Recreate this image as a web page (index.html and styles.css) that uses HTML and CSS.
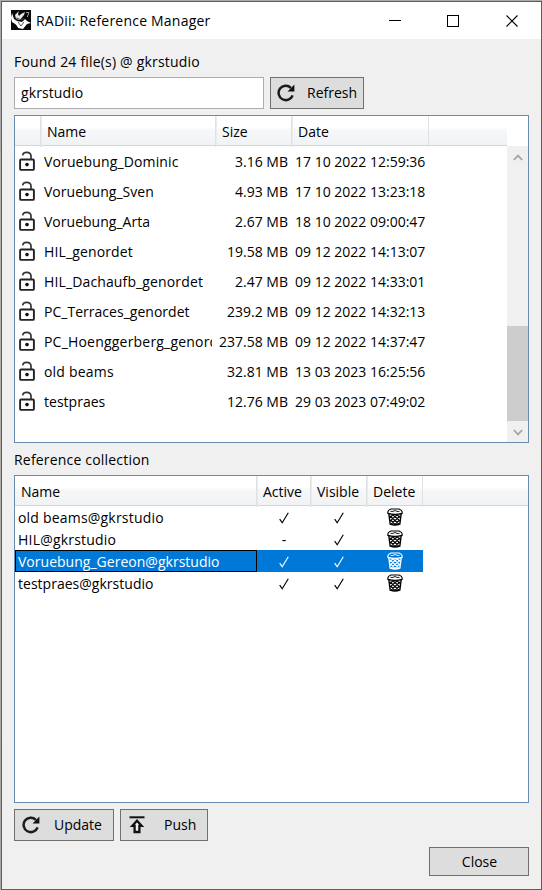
FILE: index.html
```
<!DOCTYPE html>
<html lang="en">
<head>
<meta charset="utf-8">
<title>RADii: Reference Manager</title>
<link rel="stylesheet" href="styles.css">
</head>
<body>
<svg width="0" height="0" class="defs" aria-hidden="true">
  <symbol id="lock" viewBox="0 0 16 21">
    <rect x="1.1" y="8.5" width="13.8" height="10.4" rx="1" fill="none" stroke="#222" stroke-width="1.9"/>
    <path d="M3.7 4.4C4 .4 11.7 .1 12 5V8.5" fill="none" stroke="#333" stroke-width="1.7"/>
    <circle cx="8" cy="13.6" r="1.8" fill="#111"/>
  </symbol>
  <symbol id="reload" viewBox="0 0 18 18">
    <path d="M15.6 11.3A7.2 7.2 0 1 1 13.9 3.8" fill="none" stroke="#1c1c1c" stroke-width="2.5"/>
    <path d="M17.4 .6V7.6H10.6Z" fill="#111"/>
  </symbol>
  <symbol id="push" viewBox="0 0 16 18">
    <path d="M.5 1.3H15.5" stroke="#111" stroke-width="2"/>
    <path d="M8 4.8L12.6 9.8H10.4V16H5.6V9.8H3.4Z" fill="#eee" stroke="#111" stroke-width="2.3"/>
  </symbol>
  <symbol id="check" viewBox="0 0 10 12">
    <path d="M.7 7.2L3.2 10.8L9.3 .8" fill="none" stroke="currentColor" stroke-width="1.15"/>
  </symbol>
  <symbol id="bin" viewBox="0 0 16 18">
    <path d="M1.8 5.5L3.2 16.2Q8 17.8 12.8 16.2L14.2 5.5Z" fill="none" stroke="currentColor" stroke-width="1.4"/>
    <path d="M3 8L11.8 16M5.5 6.5L13 13M9 6L13.3 9.5M3.6 12L8 16.5M13 8L4.2 16M10.5 6.5L3 13M7 6L2.8 9.5M12.5 12L8 16.5" stroke="currentColor" stroke-width="1.1"/>
    <path d="M.9 3.8Q1 2.2 4 1H12Q15 2.2 15.1 3.8V5.3Q8 7.3 .9 5.3Z" class="lid" stroke="currentColor" stroke-width="1.2"/>
    <path d="M3.5 3.4H6L8 2.5L10 3.4H12.5" fill="none" stroke="currentColor" stroke-width=".9"/>
  </symbol>
</svg>
<main class="window">
  <header class="titlebar">
    <svg class="logo" viewBox="0 0 20 20">
      <rect width="20" height="20" fill="#080808"/>
      <path d="M1 3L3 9L6 11L11 12L14 9L16 11L20 13L16 14L12 19L7 18L4 14L1 12L0 8Z" fill="#fff"/>
      <path d="M8 1L4 5L5 9L9 10L13 5L14 2L10 4L8 6L7 4Z" fill="#e6e6e6"/>
      <path d="M5 8L11 10L13 8M7 12L10 16L13 12" fill="none" stroke="#444" stroke-width=".9"/>
      <path d="M0 13Q5 13 7 18L8 20H0Z" fill="#080808"/>
      <path d="M15 2.5H18L16.3 7" fill="none" stroke="#aaa" stroke-width=".9"/>
    </svg>
    <h1 class="title">RADii: Reference Manager</h1>
    <svg class="controls" viewBox="0 0 130 12" shape-rendering="crispEdges">
      <path d="M0 5.5H12" stroke="#000"/>
      <rect x="58.5" y=".5" width="11" height="11" fill="none" stroke="#000"/>
      <path d="M117.5 .5L128.5 11.5M128.5 .5L117.5 11.5" stroke="#000" shape-rendering="auto" stroke-width="1.1"/>
    </svg>
  </header>
  <div class="content">
    <div class="label found">Found 24 file(s) @ gkrstudio</div>
    <div class="search">
      <div class="input">gkrstudio</div>
      <div class="button refresh"><svg class="reload"><use href="#reload"/></svg><span>Refresh</span></div>
    </div>
    <section class="list files">
      <div class="main">
        <div class="head files-grid"><span></span><span>Name</span><span>Size</span><span>Date</span></div>
        <div class="row files-grid"><svg class="lock"><use href="#lock"/></svg><span class="name">Voruebung_Dominic</span><span class="size">3.16 MB</span><span class="date">17 10 2022 12:59:36</span></div>
        <div class="row files-grid"><svg class="lock"><use href="#lock"/></svg><span class="name snug">Voruebung_Sven</span><span class="size">4.93 MB</span><span class="date">17 10 2022 13:23:18</span></div>
        <div class="row files-grid"><svg class="lock"><use href="#lock"/></svg><span class="name snug">Voruebung_Arta</span><span class="size">2.67 MB</span><span class="date">18 10 2022 09:00:47</span></div>
        <div class="row files-grid"><svg class="lock"><use href="#lock"/></svg><span class="name">HIL_genordet</span><span class="size">19.58 MB</span><span class="date">09 12 2022 14:13:07</span></div>
        <div class="row files-grid"><svg class="lock"><use href="#lock"/></svg><span class="name">HIL_Dachaufb_genordet</span><span class="size">2.47 MB</span><span class="date">09 12 2022 14:33:01</span></div>
        <div class="row files-grid"><svg class="lock"><use href="#lock"/></svg><span class="name snug">PC_Terraces_genordet</span><span class="size">239.2 MB</span><span class="date">09 12 2022 14:32:13</span></div>
        <div class="row files-grid"><svg class="lock"><use href="#lock"/></svg><span class="name wide">PC_Hoenggerberg_genordet</span><span class="size">237.58 MB</span><span class="date">09 12 2022 14:37:47</span></div>
        <div class="row files-grid"><svg class="lock"><use href="#lock"/></svg><span class="name wide">old beams</span><span class="size">32.81 MB</span><span class="date">13 03 2023 16:25:56</span></div>
        <div class="row files-grid"><svg class="lock"><use href="#lock"/></svg><span class="name snug">testpraes</span><span class="size">12.76 MB</span><span class="date">29 03 2023 07:49:02</span></div>
      </div>
      <div class="scrollbar">
        <svg class="arrow" viewBox="0 0 10 7"><path d="M.8 6L5 1.6L9.2 6" fill="none" stroke="#a3a3a3" stroke-width="1.8"/></svg>
        <div class="thumb"></div>
        <svg class="arrow" viewBox="0 0 10 7"><path d="M.8 1L5 5.4L9.2 1" fill="none" stroke="#a3a3a3" stroke-width="1.8"/></svg>
      </div>
    </section>
    <div class="label collection">Reference collection</div>
    <section class="list refs">
      <div class="main">
        <div class="head refs-grid"><span>Name</span><span>Active</span><span>Visible</span><span>Delete</span></div>
        <div class="ref refs-grid"><span class="name wide">old beams@gkrstudio</span><svg class="check"><use href="#check"/></svg><svg class="check"><use href="#check"/></svg><svg class="bin"><use href="#bin"/></svg></div>
        <div class="ref refs-grid"><span class="name wide">HIL@gkrstudio</span><span class="dash">-</span><svg class="check"><use href="#check"/></svg><svg class="bin"><use href="#bin"/></svg></div>
        <div class="ref refs-grid selected"><span class="name snug">Voruebung_Gereon@gkrstudio</span><svg class="check"><use href="#check"/></svg><svg class="check"><use href="#check"/></svg><svg class="bin"><use href="#bin"/></svg></div>
        <div class="ref refs-grid"><span class="name snug">testpraes@gkrstudio</span><svg class="check"><use href="#check"/></svg><svg class="check"><use href="#check"/></svg><svg class="bin"><use href="#bin"/></svg></div>
      </div>
    </section>
    <div class="actions">
      <div class="button update"><svg class="reload"><use href="#reload"/></svg><span>Update</span></div>
      <div class="button push"><svg class="up"><use href="#push"/></svg><span>Push</span></div>
    </div>
    <div class="footer"><div class="button close">Close</div></div>
  </div>
</main>
</body>
</html>
```
FILE: styles.css
```
* { box-sizing: border-box; }
body {
  margin: 0;
  height: 890px;
  padding: 1px 0 0 1px;
  background: linear-gradient(#aaa, #aaa 150px, #b5b0ab 151px, #aba7a2);
  font: 14px/20px "Open Sans", "Noto Sans", sans-serif;
  color: #000;
  overflow: hidden;
}
.defs { position: absolute; }
svg { display: block; }
.window {
  width: 541px;
  height: 889px;
  border: 1px solid #5c5e61;
  background: #f0f0f0;
}
.titlebar {
  height: 37px;
  display: flex;
  align-items: center;
  background: #fff;
  padding: 0 22px 0 9px;
}
.logo { width: 20px; height: 20px; margin-top: -1px; }
.title { font: inherit; margin: 0 auto 0 5px; letter-spacing: .21px; }
.controls { width: 130px; height: 12px; }
.content { padding: 13px 12px 0 12px; }
.label { height: 20px; white-space: nowrap; letter-spacing: .19px; }
.search { display: flex; gap: 6px; margin: 5px 0 6px; }
.input {
  width: 250px;
  height: 32px;
  border: 1px solid #abadb3;
  background: #fff;
  padding: 5px 6px;
  letter-spacing: .1px;
}
.button {
  height: 32px;
  display: flex;
  align-items: center;
  border: 1px solid #707070;
  background: #ddd;
}
.refresh { width: 94px; padding-left: 6px; gap: 12px; }
.reload { width: 18px; height: 18px; }
.list {
  height: 328px;
  border: 1px solid #688caf;
  background: #fff;
  display: flex;
}
.main { flex: 1; min-width: 0; }
.head {
  height: 30px;
  border-bottom: 1px solid #d5d5d5;
  background: linear-gradient(#fff 0 12px, #f7f8fa 13px, #f1f2f4);
  line-height: 31px;
}
.head span { padding-left: 6px; border-right: 1px solid #e0e1e3; box-shadow: 1px 0 #ebebec; }
.head span:last-child { box-shadow: none; }
.files-grid { display: grid; grid-template-columns: 26px 175px 76px 137px; }
.row { height: 30px; line-height: 30px; }
.row span { padding-top: 1px; }
.lock { width: 16px; height: 21px; margin: 5px 0 0 4px; }
.name, .size, .date { overflow: hidden; white-space: nowrap; }
.name { letter-spacing: .13px; }
.snug { letter-spacing: .02px; }
.wide { letter-spacing: .2px; }
.row .name { margin: 0 4px 0 3px; }
.size { text-align: right; padding-right: 4px; }
.date { padding-left: 3px; }
.scrollbar {
  width: 21px;
  margin-top: 30px;
  background: #f0f0f0;
  display: flex;
  flex-direction: column;
  align-items: center;
  padding: 8px 0 6px;
}
.arrow { width: 10px; height: 7px; }
.thumb { width: 21px; height: 95px; background: #cdcdcd; margin: auto 0 8px; }
.collection { margin: 7px 0 5px; }
.refs-grid { display: grid; grid-template-columns: 242px 54px 56px 56px; }
.ref { --row-fill: #fff; width: 408px; height: 22px; line-height: 21px; justify-items: center; align-items: center; }
.ref .name { justify-self: stretch; height: 22px; padding: 0 2px; border: 1px solid transparent; line-height: 22px; }
.check { width: 10px; height: 12px; margin: 1px 1px 0 0; }
.bin { width: 16px; height: 18px; margin: 0 1px 0 0; }
.lid { fill: var(--row-fill); }
.ref.selected { --row-fill: #0078d7; background: #0078d7; color: #fff; }
.selected .name { border-color: #000; }
.actions { display: flex; gap: 6px; margin-top: 6px; }
.update { width: 100px; padding-left: 7px; gap: 14px; }
.push { width: 88px; padding-left: 8px; gap: 19px; }
.up { width: 16px; height: 18px; }
.footer { display: flex; justify-content: flex-end; margin-top: 6px; }
.close { width: 100px; height: 29px; justify-content: center; padding: 1px 0 0 1px; }
```
